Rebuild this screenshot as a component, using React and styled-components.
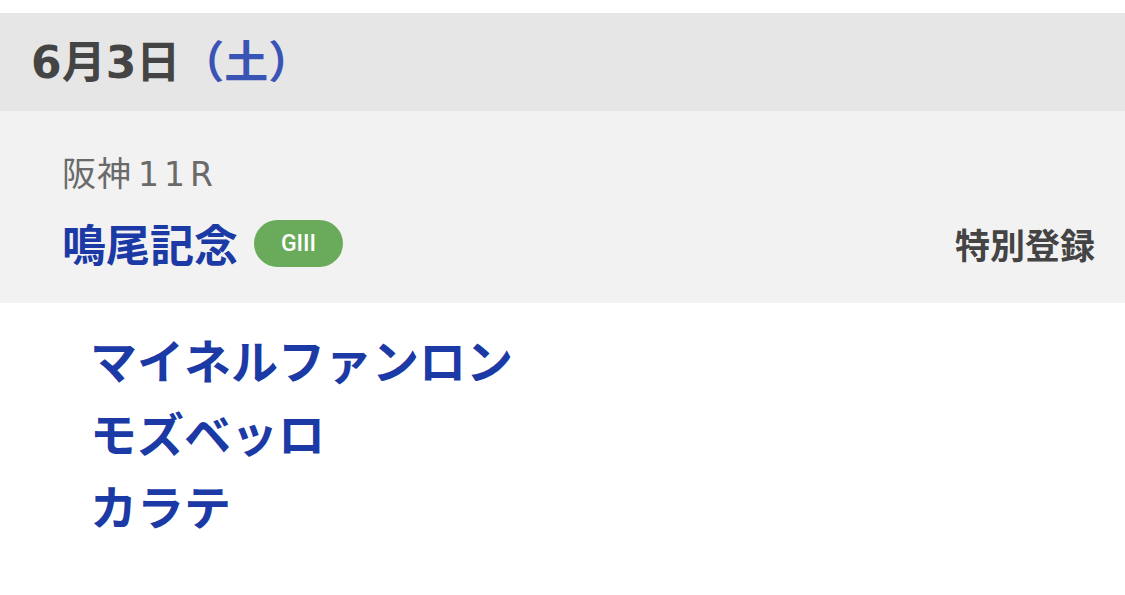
import React from "react"
import styled, {createGlobalStyle} from "styled-components";

const GlobalStyle = createGlobalStyle`
  body {
    margin: 0;
    padding: 0;
    background: #fff;
    font-family: "Noto Sans CJK JP", "Noto Sans", sans-serif;
  }
`;

const Page = styled.div`
  padding-top: 13px;
`

const DateBar = styled.div`
  height: 98px;
  box-sizing: border-box;
  background: #e6e6e6;
  display: flex;
  align-items: center;
  padding: 0 0 2px 31px;
  font-size: 44px;
  font-weight: 700;
  color: #444;
  .dow {
    color: #3a54b6;
  }
`

const Line = styled.span`
  line-height: 1.2;
`

const Num = styled.span`
  font-family: "DejaVu Sans", sans-serif;
  font-size: ${p => p.size || 44}px;
  font-weight: ${p => p.weight || 700};
  letter-spacing: ${p => p.spacing || 0}px;
  margin: 0 ${p => p.gap || 0}px 0 ${p => p.lead || 0}px;
`

const RaceHead = styled.div`
  background: #f2f2f2;
  padding: 40px 30px 28px 62px;
`

const Venue = styled.div`
  height: 44px;
  display: flex;
  align-items: center;
  font-size: 34px;
  font-weight: 400;
  letter-spacing: 1px;
  color: #6a6a6a;
`

const TitleRow = styled.div`
  margin-top: 16px;
  height: 64px;
  display: flex;
  align-items: center;
  justify-content: space-between;
`

const RaceName = styled.div`
  display: flex;
  align-items: center;
  gap: 16px;
  font-size: 44px;
  font-weight: 700;
  color: #1b3aa6;
`

const Grade = styled.span`
  display: inline-flex;
  align-items: center;
  justify-content: center;
  width: 89px;
  height: 47px;
  border-radius: 24px;
  background: #6aab5b;
  color: #fff;
  font-family: Roboto, "Liberation Sans", sans-serif;
  font-size: 23px;
  font-weight: 500;
`

const Status = styled.div`
  font-size: 35px;
  font-weight: 700;
  color: #444;
`

const HorseList = styled.ul`
  list-style: none;
  margin: 0;
  padding: 19px 0 0 90px;
  li {
    font-size: 47px;
    line-height: 73px;
    font-weight: 700;
    color: #1b3aa6;
  }
`

const horses = ["マイネルファンロン", "モズベッロ", "カラテ"]

export default function App() {
  return (
    <Page>
      <GlobalStyle/>
      <DateBar>
        <Line>
          <Num>6</Num>月<Num>3</Num>日<span className="dow">（土）</span>
        </Line>
      </DateBar>
      <RaceHead>
        <Venue>
          <Line>
            阪神<Num size={33} weight={400} spacing={5} lead={6}>11R</Num>
          </Line>
        </Venue>
        <TitleRow>
          <RaceName>
            鳴尾記念
            <Grade>GIII</Grade>
          </RaceName>
          <Status>特別登録</Status>
        </TitleRow>
      </RaceHead>
      <HorseList>
        {horses.map(h => <li key={h}>{h}</li>)}
      </HorseList>
    </Page>
  )
}
